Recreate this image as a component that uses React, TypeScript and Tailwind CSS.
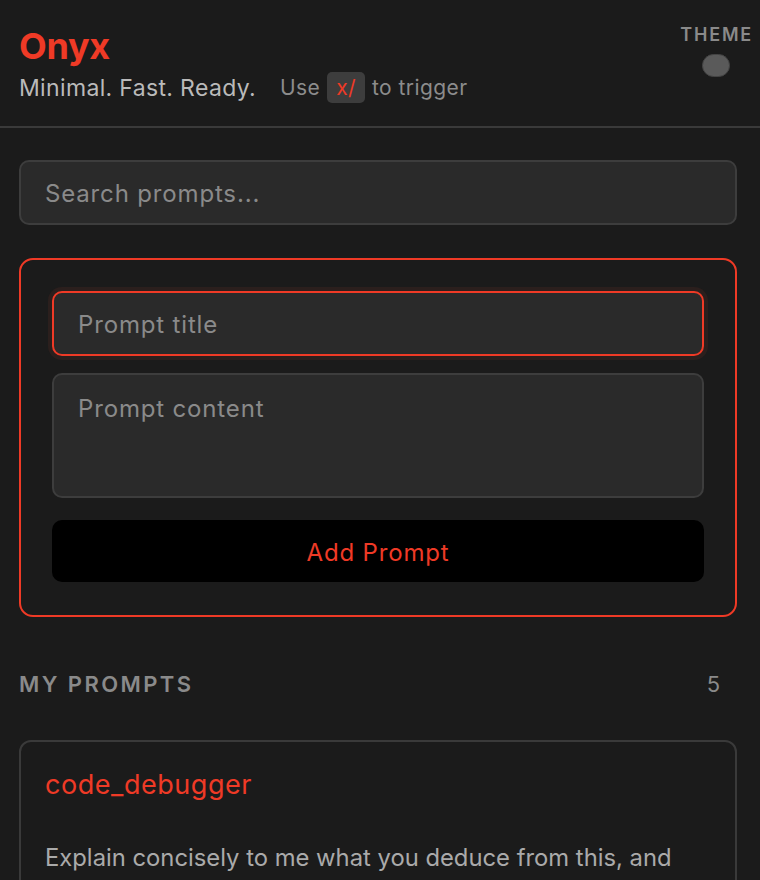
import React from "react";

export default function App() {
  const font = { fontFamily: "Inter, 'Noto Sans', sans-serif" };
  return (
    <div className="min-h-[880px] w-full bg-[#1b1b1b] text-[#b8b8b8]" style={font}>
      <header className="flex justify-between border-b-2 border-[#3a3a3a] pl-[19px] pr-[7px] pt-[24px] pb-[22px]">
        <div className="flex flex-col">
          <h1 className="text-[36px] font-bold leading-[44px] text-[#ef3a26] tracking-[-0.3px]">Onyx</h1>
          <div className="mt-[4px] flex items-center">
            <span className="text-[23px] leading-[30px] tracking-[0.015em] text-[#bababa]">Minimal. Fast. Ready.</span>
            <span className="ml-[24px] flex items-center text-[21px] tracking-[0.02em] text-[#8c8c8c]">
              Use
              <kbd className="mx-[7px] rounded-[5px] bg-[#3d3d3d] px-[9px] py-[2px] text-[21px] leading-[27px] text-[#ef3a26]" style={{ fontFamily: "Inter, sans-serif" }}>x/</kbd>
              to trigger
            </span>
          </div>
        </div>
        <div className="flex flex-col items-center">
          <span className="text-[18px] font-semibold tracking-[0.1em] leading-[22px] text-[#8a8a8a]">THEME</span>
          <span className="mt-[8px] mr-[2px] block h-[23px] w-[28px] rounded-full border border-[#444] bg-[#5a5a5a]" />
        </div>
      </header>

      <main className="pl-[19px] pr-[23px] pt-[32px]">
        <div className="flex h-[65px] items-center rounded-[10px] border-2 border-[#3d3d3d] bg-[#2a2a2a] px-[24px] pt-[4px] text-[24px] tracking-[0.035em] text-[#8a8a8a]">
          Search prompts...
        </div>

        <div className="mt-[33px] rounded-[14px] border-2 border-[#ef3a26] px-[31px] pt-[31px] pb-[33px]">
          <div className="flex h-[65px] items-center rounded-[10px] border-2 border-[#ef3a26] bg-[#2a2a2a] px-[24px] pt-[4px] text-[24px] tracking-[0.035em] text-[#8a8a8a] shadow-[0_0_0_4px_#2b1f1d]">
            Prompt title
          </div>
          <div className="mt-[17px] h-[125px] rounded-[10px] border-2 border-[#3d3d3d] bg-[#2a2a2a] px-[24px] pt-[18px] text-[24px] leading-[32px] tracking-[0.035em] text-[#8a8a8a]">
            Prompt content
          </div>
          <button className="mt-[22px] flex h-[62px] w-full items-center justify-center rounded-[10px] bg-black pt-[4px] text-[24px] tracking-[0.035em] text-[#ef3a26]">
            Add Prompt
          </button>
        </div>

        <div className="mt-[51px] flex items-center justify-between pr-[17px]">
          <span className="text-[22px] font-semibold tracking-[0.11em] text-[#8a8a8a]">MY PROMPTS</span>
          <span className="text-[22px] text-[#8a8a8a]">5</span>
        </div>

        <div className="mt-[39px] rounded-[12px] border-2 border-[#3a3a3a] px-[24px] pt-[26px] pb-[24px]">
          <div className="text-[27px] leading-[34px] tracking-[0.02em] text-[#ef3a26]">code_debugger</div>
          <p className="mt-[38px] text-[23.8px] leading-[36px] text-[#aaaaaa]">
            Explain concisely to me what you deduce from this, and what should I do next? Be precise and brief with each step.
          </p>
        </div>
      </main>
    </div>
  );
}
